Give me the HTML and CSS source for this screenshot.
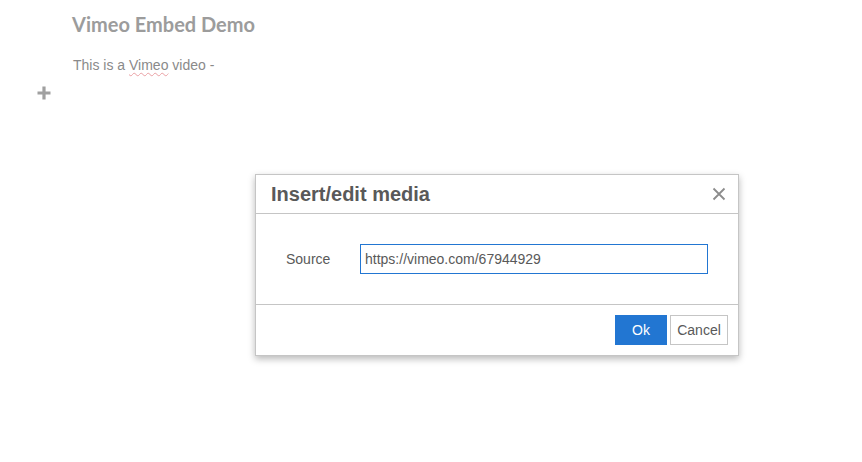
FILE: index.html
```html
<!DOCTYPE html>
<html>
<head>
<meta charset="utf-8">
<link rel="stylesheet" href="styles.css">
</head>
<body>
<div class="editor">
  <h1 class="doc-title">Vimeo Embed Demo</h1>
  <p class="doc-text">This is a <span class="misspelled">Vimeo</span> video -</p>
  <div class="add-row">
    <svg class="plus" width="16" height="16" viewBox="0 0 16 16"><path d="M8 1.5v13M1.5 8h13" stroke="#a0a0a0" stroke-width="3.2" fill="none"/></svg>
  </div>
</div>
<div class="dialog">
  <div class="dialog-head">
    <span class="dialog-title">Insert/edit media</span>
    <svg class="close" width="14" height="14" viewBox="0 0 14 14"><path d="M1.5 1.5l11 11M12.5 1.5l-11 11" stroke="#8c8c8c" stroke-width="1.8" fill="none"/></svg>
  </div>
  <div class="dialog-body">
    <label class="field-label">Source</label>
    <div class="field-input">https://vimeo.com/67944929</div>
  </div>
  <div class="dialog-foot">
    <button class="btn btn-primary">Ok</button>
    <button class="btn btn-default">Cancel</button>
  </div>
</div>
</body>
</html>
```

FILE: styles.css
```css
html, body {
  margin: 0;
  padding: 0;
  background: #fff;
  font-family: "Liberation Sans", Arial, sans-serif;
}
.editor {
  padding: 12px 0 0 36px;
}
.doc-title {
  margin: 0 0 0 36px;
  font-family: "Lato", "Liberation Sans", sans-serif;
  font-weight: 700;
  font-size: 20px;
  line-height: 24px;
  color: #9c9c9c;
}
.doc-text {
  margin: 20px 0 0 37px;
  font-size: 14px;
  line-height: 18px;
  color: #8a8a8a;
}
.misspelled {
  text-decoration: underline wavy #eaa0a4;
  text-decoration-thickness: 1px;
  text-underline-offset: 2px;
}
.add-row {
  margin-top: 11px;
  height: 16px;
}
.plus { display: block; }

.dialog {
  position: absolute;
  left: 255px;
  top: 174px;
  width: 482px;
  border: 1px solid #c5c5c5;
  background: #fff;
  box-shadow: 0 3px 7px rgba(0,0,0,0.28);
  box-sizing: content-box;
}
.dialog-head {
  height: 38px;
  border-bottom: 1px solid #c5c5c5;
  display: flex;
  align-items: center;
  justify-content: space-between;
  padding: 0 12px 0 15px;
}
.dialog-title {
  font-size: 20px;
  font-weight: 700;
  color: #595959;
}
.close { display: block; }
.dialog-body {
  height: 90px;
  display: flex;
  align-items: center;
  padding: 0 30px 0 30px;
  border-bottom: 1px solid #c5c5c5;
}
.field-label {
  width: 74px;
  font-size: 14px;
  color: #595959;
}
.field-input {
  box-sizing: border-box;
  width: 348px;
  height: 30px;
  border: 1px solid #2276d2;
  padding: 0 4px;
  font-size: 14px;
  line-height: 28px;
  color: #595959;
  margin-top: 0;
}
.dialog-foot {
  height: 50px;
  display: flex;
  align-items: center;
  justify-content: flex-end;
  gap: 3px;
  padding: 0 10px;
}
.btn {
  height: 30px;
  box-sizing: border-box;
  font-family: "Liberation Sans", Arial, sans-serif;
  font-size: 14px;
  padding: 0;
  margin: 0;
  cursor: pointer;
}
.btn-primary {
  width: 52px;
  background: #2276d2;
  border: 1px solid #2276d2;
  color: #fff;
}
.btn-default {
  width: 58px;
  background: #fff;
  border: 1px solid #c5c5c5;
  color: #595959;
}
```
